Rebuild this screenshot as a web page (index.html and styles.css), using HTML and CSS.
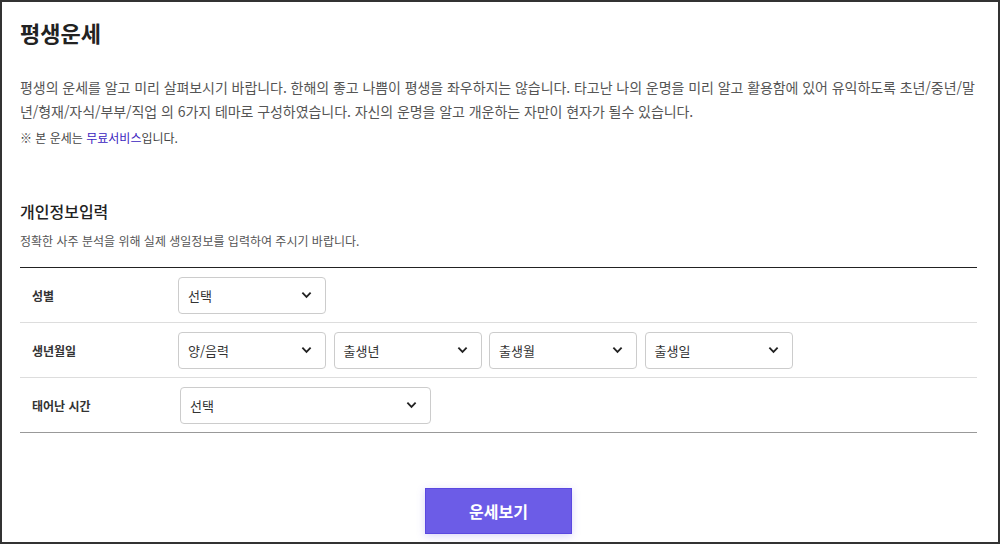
FILE: index.html
```html
<!DOCTYPE html>
<html lang="ko">
<head>
    <meta charset="UTF-8">
    <meta name="viewport" content="width=device-width, initial-scale=1.0">
    <title>평생운세</title>
    <link rel="stylesheet" href="styles.css">
</head>
<body>
    <div class="page">
        <h1 class="title">평생운세</h1>
        <p class="desc">평생의 운세를 알고 미리 살펴보시기 바랍니다. 한해의 좋고 나쁨이 평생을 좌우하지는 않습니다. 타고난 나의 운명을 미리 알고 활용함에 있어 유익하도록 초년/중년/말년/형재/자식/부부/직업 의 6가지 테마로 구성하였습니다. 자신의 운명을 알고 개운하는 자만이 현자가 될수 있습니다.</p>
        <p class="note">※ 본 운세는 <span class="free">무료서비스</span>입니다.</p>

        <h2 class="section-title">개인정보입력</h2>
        <p class="section-desc">정확한 사주 분석을 위해 실제 생일정보를 입력하여 주시기 바랍니다.</p>

        <div class="form">
            <div class="row">
                <div class="label">성별</div>
                <div class="fields">
                    <div class="select"><span>선택</span><svg viewBox="0 0 12 8"><path d="M1.5 1.5 6 6l4.5-4.5"/></svg></div>
                </div>
            </div>
            <div class="row">
                <div class="label">생년월일</div>
                <div class="fields">
                    <div class="select"><span>양/음력</span><svg viewBox="0 0 12 8"><path d="M1.5 1.5 6 6l4.5-4.5"/></svg></div>
                    <div class="select"><span>출생년</span><svg viewBox="0 0 12 8"><path d="M1.5 1.5 6 6l4.5-4.5"/></svg></div>
                    <div class="select"><span>출생월</span><svg viewBox="0 0 12 8"><path d="M1.5 1.5 6 6l4.5-4.5"/></svg></div>
                    <div class="select"><span>출생일</span><svg viewBox="0 0 12 8"><path d="M1.5 1.5 6 6l4.5-4.5"/></svg></div>
                </div>
            </div>
            <div class="row last">
                <div class="label">태어난 시간</div>
                <div class="fields">
                    <div class="select wide"><span>선택</span><svg viewBox="0 0 12 8"><path d="M1.5 1.5 6 6l4.5-4.5"/></svg></div>
                </div>
            </div>
        </div>

        <div class="actions">
            <button class="btn">운세보기</button>
        </div>
    </div>
</body>
</html>
```

FILE: styles.css
```css
* {
    box-sizing: border-box;
}
body {
    margin: 0;
    font-family: "Noto Sans CJK KR", "Noto Sans", sans-serif;
    color: #333;
    background: #fff;
}
.page {
    width: 1000px;
    height: 544px;
    border: 2px solid #333;
    padding: 15px 21px 0 18px;
    overflow: hidden;
}
.title {
    margin: 0;
    font-size: 22px;
    line-height: 30px;
    font-weight: 700;
    color: #222;
}
.desc {
    margin: 28px 0 0;
    font-size: 14px;
    line-height: 24px;
    letter-spacing: -0.06px;
    color: #555;
}
.note {
    margin: 6px 0 0;
    font-size: 12px;
    line-height: 18px;
    color: #444;
}
.free {
    color: #3b25c0;
}
.section-title {
    margin: 52px 0 0;
    font-size: 16px;
    line-height: 24px;
    font-weight: 500;
    color: #222;
}
.section-desc {
    margin: 10px 0 0;
    font-size: 12px;
    line-height: 16px;
    color: #555;
}
.form {
    margin-top: 18px;
    border-top: 1px solid #222;
}
.row {
    display: flex;
    align-items: center;
    height: 55px;
    border-bottom: 1px solid #ddd;
}
.row.last {
    border-bottom-color: #999;
}
.label {
    width: 158px;
    padding-left: 12px;
    font-size: 12px;
    font-weight: 700;
    color: #333;
}
.fields {
    display: flex;
    gap: 7.5px;
}
.row.last .fields {
    margin-left: 2px;
}
.select {
    display: flex;
    align-items: center;
    justify-content: space-between;
    width: 148px;
    height: 37px;
    padding: 0 13px 0 9px;
    border: 1px solid #ccc;
    border-radius: 4px;
    font-size: 13px;
    color: #333;
}
.select.wide {
    width: 251px;
}
.select svg {
    width: 11px;
    height: 8px;
    fill: none;
    stroke: #222;
    stroke-width: 2;
}
.actions {
    display: flex;
    justify-content: center;
    margin-top: 55px;
}
.btn {
    width: 147px;
    height: 46px;
    border: 1px solid #5a48e0;
    background: #6c5ce7;
    color: #fff;
    font-family: inherit;
    font-size: 16px;
    font-weight: 700;
    box-shadow: 0 2px 8px rgba(108, 92, 231, 0.25);
}
```
